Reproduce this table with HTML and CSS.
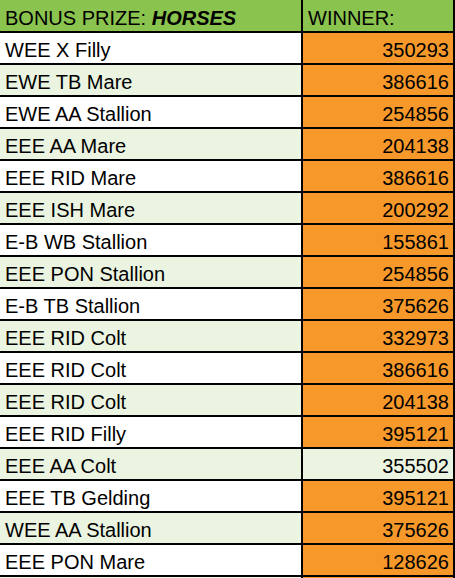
FILE: index.html
```html
<!DOCTYPE html>
<html>
<head>
<meta charset="utf-8">
<link rel="stylesheet" href="styles.css">
</head>
<body>
<div class="sheet">
  <div class="cell head"><span>BONUS PRIZE: <b><i>HORSES</i></b></span></div>
  <div class="cell head"><span>WINNER:</span></div>

  <div class="cell name">WEE X Filly</div><div class="cell num">350293</div>
  <div class="cell name alt">EWE TB Mare</div><div class="cell num">386616</div>
  <div class="cell name">EWE AA Stallion</div><div class="cell num">254856</div>
  <div class="cell name alt">EEE AA Mare</div><div class="cell num">204138</div>
  <div class="cell name">EEE RID Mare</div><div class="cell num">386616</div>
  <div class="cell name alt">EEE ISH Mare</div><div class="cell num">200292</div>
  <div class="cell name">E-B WB Stallion</div><div class="cell num">155861</div>
  <div class="cell name alt">EEE PON Stallion</div><div class="cell num">254856</div>
  <div class="cell name">E-B TB Stallion</div><div class="cell num">375626</div>
  <div class="cell name alt">EEE RID Colt</div><div class="cell num">332973</div>
  <div class="cell name">EEE RID Colt</div><div class="cell num">386616</div>
  <div class="cell name alt">EEE RID Colt</div><div class="cell num">204138</div>
  <div class="cell name">EEE RID Filly</div><div class="cell num">395121</div>
  <div class="cell name alt">EEE AA Colt</div><div class="cell num plain">355502</div>
  <div class="cell name">EEE TB Gelding</div><div class="cell num">395121</div>
  <div class="cell name alt">WEE AA Stallion</div><div class="cell num">375626</div>
  <div class="cell name">EEE PON Mare</div><div class="cell num">128626</div>
  <div class="cell name alt"></div><div class="cell num"></div>
</div>
</body>
</html>
```

FILE: styles.css
```css
html, body {
  margin: 0;
  padding: 0;
  background: #ffffff;
  overflow: hidden;
  height: 578px;
}

.sheet {
  display: grid;
  grid-template-columns: 303px 152px;
  grid-template-rows: 33px;
  grid-auto-rows: 32px;
  width: 455px;
  height: 578px;
  overflow: hidden;
  font-family: "Liberation Sans", Arial, sans-serif;
  font-size: 20px;
  color: #000;
}

.cell {
  box-sizing: border-box;
  border-right: 2px solid #000;
  border-bottom: 2px solid #000;
  display: flex;
  align-items: flex-end;
  padding: 0 5px 1px 5px;
  line-height: 23px;
  white-space: nowrap;
  overflow: hidden;
}

.head {
  background: #8bc34f;
}

.name {
  background: #ffffff;
}

.name.alt {
  background: #ebf4e0;
}

.num {
  justify-content: flex-end;
  padding-right: 4px;
  background: #f7982b;
}

.num.plain {
  background: #ebf4e0;
}
```
